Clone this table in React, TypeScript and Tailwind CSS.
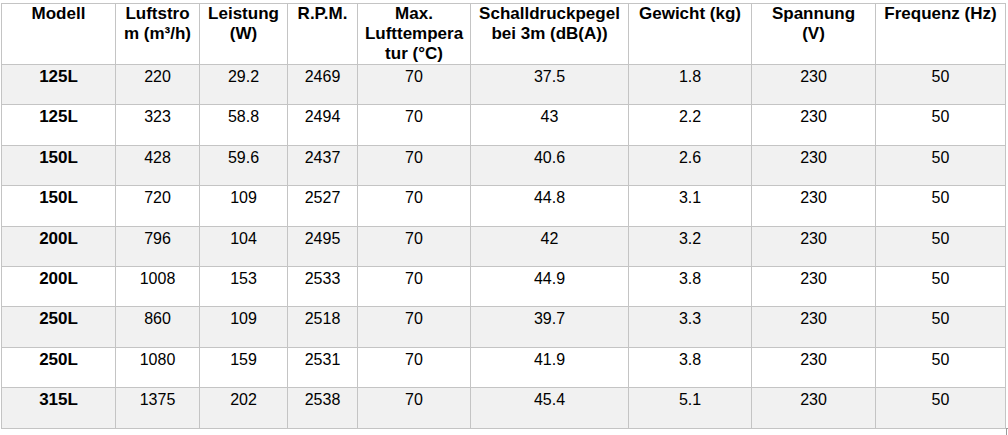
import React from "react";

const cols = [114, 84, 88, 70, 113, 158, 123, 124, 130];

const headers: string[][] = [
  ["Modell"],
  ["Luftstro", "m (m³/h)"],
  ["Leistung", "(W)"],
  ["R.P.M."],
  ["Max.", "Lufttempera", "tur (°C)"],
  ["Schalldruckpegel", "bei 3m (dB(A))"],
  ["Gewicht (kg)"],
  ["Spannung", "(V)"],
  ["Frequenz (Hz)"],
];

const rows: string[][] = [
  ["125L", "220", "29.2", "2469", "70", "37.5", "1.8", "230", "50"],
  ["125L", "323", "58.8", "2494", "70", "43", "2.2", "230", "50"],
  ["150L", "428", "59.6", "2437", "70", "40.6", "2.6", "230", "50"],
  ["150L", "720", "109", "2527", "70", "44.8", "3.1", "230", "50"],
  ["200L", "796", "104", "2495", "70", "42", "3.2", "230", "50"],
  ["200L", "1008", "153", "2533", "70", "44.9", "3.8", "230", "50"],
  ["250L", "860", "109", "2518", "70", "39.7", "3.3", "230", "50"],
  ["250L", "1080", "159", "2531", "70", "41.9", "3.8", "230", "50"],
  ["315L", "1375", "202", "2538", "70", "45.4", "5.1", "230", "50"],
];

export default function App() {
  return (
    <div
      className="relative w-[1008px] h-[435px] bg-white overflow-hidden pt-[3px] pl-[1px] text-black"
      style={{ fontFamily: '"Liberation Sans", Arial, sans-serif' }}
    >
      <table className="table-fixed border-collapse w-[1005px]">
        <colgroup>
          {cols.map((w, i) => (
            <col key={i} style={{ width: w }} />
          ))}
        </colgroup>
        <thead>
          <tr className="h-[59px] bg-white">
            {headers.map((lines, i) => (
              <th
                key={i}
                className="border border-[#c4c4c4] align-top text-center font-bold text-[17px] leading-[20px] pt-0 pb-0 px-1 whitespace-nowrap"
              >
                {lines.map((l, j) => (
                  <div key={j}>{l}</div>
                ))}
              </th>
            ))}
          </tr>
        </thead>
        <tbody>
          {rows.map((r, i) => (
            <tr
              key={i}
              className={`h-[40.4px] ${i % 2 === 0 ? "bg-[#f1f1f1]" : "bg-white"}`}
            >
              {r.map((c, j) => (
                <td
                  key={j}
                  className={`border border-[#c4c4c4] align-top text-center leading-[20px] pt-[2px] pb-0 px-1 ${
                    j === 0 ? "font-bold text-[17px]" : "text-[16px]"
                  }`}
                >
                  {c}
                </td>
              ))}
            </tr>
          ))}
        </tbody>
      </table>
      <div className="absolute left-[1006px] top-[428px] w-[3px] h-[7px] border-l border-t border-[#9a9a9a]" />
    </div>
  );
}
